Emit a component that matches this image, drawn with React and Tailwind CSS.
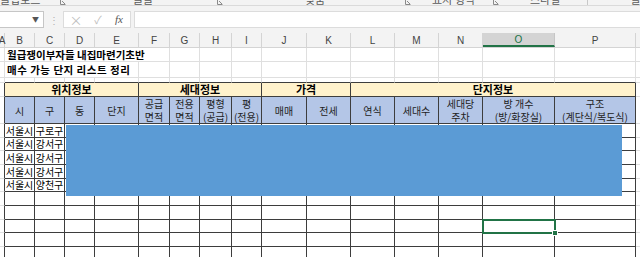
import React from 'react';

const FONT = { fontFamily: '"Noto Sans CJK KR", "Liberation Sans", sans-serif' };

// column widths A..Q
const W = [5, 30, 30, 30, 44, 31, 30, 32, 30, 45, 44, 44, 44, 44, 72, 81, 30];
const LETTERS = ['A', 'B', 'C', 'D', 'E', 'F', 'G', 'H', 'I', 'J', 'K', 'L', 'M', 'N', 'O', 'P', 'Q'];

const LIGHT = 'shrink-0 border-r border-b border-[#dfdfdf]';
const DARK = 'shrink-0 border-r border-b border-[#3d3d3d]';
const EDGE = 'shrink-0 border-r border-b border-r-[#3d3d3d] border-b-[#dfdfdf]';
const TOPDARK = 'shrink-0 border-r border-b border-r-[#dfdfdf] border-b-[#3d3d3d]';

const SUB = ['시', '구', '동', '단지', '공급\n면적', '전용\n면적', '평형\n(공급)', '평\n(전용)', '매매', '전세', '연식', '세대수', '세대당\n주차', '방 개수\n(방/화장실)', '구조\n(계단식/복도식)'];
const DATA = ['구로구', '강서구', '강서구', '강서구', '양천구'];
const ROW_H = [14, 13, 14, 14, 13, 14, 14, 13, 14, 14];

function Launcher() {
  return (
    <svg width="6" height="6" viewBox="0 0 6 6" className="mt-[-1px]">
      <path d="M0.5 0.5 V5.5 H5.5" fill="none" stroke="#8a8a8a" strokeWidth="1" />
      <path d="M2 2 L5 5" stroke="#8a8a8a" strokeWidth="1" />
    </svg>
  );
}

function Ribbon() {
  const seg = 'shrink-0 overflow-hidden whitespace-nowrap';
  const txt = 'block -mt-[7px] text-[11px] leading-[12px] text-[#5a5a5a]';
  return (
    <div className="flex h-[5px] overflow-hidden bg-[#f3f3f3]" style={FONT}>
      <div className={`${seg} w-[60px]`}><span className={txt}>클립보드</span></div>
      <div className={`${seg} w-[73px]`}><Launcher /></div>
      <div className={`${seg} w-[84px]`}><span className={txt}>글꼴</span></div>
      <div className={`${seg} w-[88px]`}><Launcher /></div>
      <div className={`${seg} w-[100px]`}><span className={txt}>맞춤</span></div>
      <div className={`${seg} w-[27px]`}><Launcher /></div>
      <div className={`${seg} w-[61px]`}><span className={txt}>표시 형식</span></div>
      <div className={`${seg} w-[37px]`}><Launcher /></div>
      <div className={`${seg} w-[57px]`}><span className={txt}>스타일</span></div>
      <div className={`${seg} w-[43px]`}><div className="w-px h-[5px] bg-[#c8c8c8]" /></div>
      <div className={`${seg} w-[10px]`}><span className={txt}>셀</span></div>
    </div>
  );
}

function FormulaBar() {
  return (
    <div className="flex items-center h-[28px] bg-[#f3f3f3] border-t border-[#dadada]">
      <div className="flex items-center justify-end w-[44px] h-[17px] bg-white border border-l-0 border-[#c6c6c6] pr-[4px]">
        <span className="text-[7px] text-[#555]">▼</span>
      </div>
      <div className="w-[19px] flex justify-center text-[#b0b0b0] text-[10px] leading-none">⋮</div>
      <div className="flex items-center w-[68px] h-[17px] bg-white border border-[#dcdcdc]">
        <span className="w-[24px] text-center text-[13px] leading-none text-[#c0c0c0]">×</span>
        <span className="w-[20px] text-center text-[11px] leading-none text-[#c0c0c0]">✓</span>
        <span className="w-[22px] text-center text-[11px] leading-none italic text-[#555]" style={{ fontFamily: '"Liberation Serif", serif' }}>fx</span>
      </div>
      <div className="ml-[3px] flex-1 h-[17px] bg-white border border-r-0 border-[#dcdcdc]" />
    </div>
  );
}

function ColHeaders() {
  return (
    <div className="flex h-[15px] bg-[#f3f3f3] border-b border-[#d4d4d4]" style={{ fontFamily: '"Liberation Sans", sans-serif' }}>
      {LETTERS.map((l, i) => (
        <div
          key={l}
          className={
            l === 'O'
              ? 'shrink-0 flex items-center justify-center bg-[#d4d4d4] border-r border-[#c6c6c6] border-b-2 border-b-[#217346] text-[#217346] text-[10px]'
              : 'shrink-0 flex items-center justify-center border-r border-[#d4d4d4] text-[#444] text-[10px]'
          }
          style={{ width: W[i] }}
        >
          {l}
        </div>
      ))}
    </div>
  );
}

export default function App() {
  return (
    <div className="relative w-[640px] h-[257px] overflow-hidden bg-white" style={FONT}>
      <Ribbon />
      <FormulaBar />
      <ColHeaders />

      {/* row 1 */}
      <div className="flex h-[14px]">
        <div className={LIGHT} style={{ width: 5 }} />
        <div className={`${LIGHT} flex items-center pl-[2px] whitespace-nowrap text-[10.5px] font-bold text-black`} style={{ width: 165 }}>
          월급쟁이부자들 내집마련기초반
        </div>
        {W.slice(6).map((w, i) => <div key={i} className={LIGHT} style={{ width: w }} />)}
      </div>

      {/* row 2 */}
      <div className="flex h-[16px]">
        <div className={LIGHT} style={{ width: 5 }} />
        <div className={`${LIGHT} flex items-center pl-[2px] whitespace-nowrap text-[10.5px] font-bold text-black tracking-[0.5px]`} style={{ width: 134 }}>
          매수 가능 단지 리스트 정리
        </div>
        {W.slice(5).map((w, i) => <div key={i} className={LIGHT} style={{ width: w }} />)}
      </div>

      {/* row 3 */}
      <div className="flex h-[5px]">
        {W.map((w, i) => (
          <div key={i} className={i >= 1 && i <= 15 ? TOPDARK : LIGHT} style={{ width: w }} />
        ))}
      </div>

      {/* group header row */}
      <div className="flex h-[14px] text-[11px] font-bold text-black leading-none">
        <div className={EDGE} style={{ width: 5 }} />
        <div className={`${DARK} flex items-center justify-center bg-[#fff2cc]`} style={{ width: 134 }}>위치정보</div>
        <div className={`${DARK} flex items-center justify-center bg-[#fff2cc]`} style={{ width: 123 }}>세대정보</div>
        <div className={`${DARK} flex items-center justify-center bg-[#fff2cc]`} style={{ width: 89 }}>가격</div>
        <div className={`${DARK} flex items-center justify-center bg-[#fff2cc]`} style={{ width: 285 }}>단지정보</div>
        <div className={LIGHT} style={{ width: 30 }} />
      </div>

      {/* sub header row */}
      <div className="flex h-[27px] text-[10px] leading-[13px] text-[#222]">
        <div className={EDGE} style={{ width: 5 }} />
        {SUB.map((s, i) => (
          <div key={i} className={`${DARK} flex items-center justify-center text-center whitespace-pre bg-[#b4c6e7] overflow-hidden`} style={{ width: W[i + 1] }}>
            {s}
          </div>
        ))}
        <div className={LIGHT} style={{ width: 30 }} />
      </div>

      {/* body rows */}
      {ROW_H.map((h, r) => (
        <div key={r} className="flex text-[10px] leading-none text-black" style={{ height: h }}>
          <div className={EDGE} style={{ width: 5 }} />
          {W.slice(1, 16).map((w, c) => (
            <div key={c} className={`${DARK} flex items-center justify-center whitespace-nowrap overflow-hidden`} style={{ width: w }}>
              {r < 5 && c === 0 ? '서울시' : r < 5 && c === 1 ? DATA[r] : ''}
            </div>
          ))}
          <div className={LIGHT} style={{ width: 30 }} />
        </div>
      ))}

      {/* shape lying over the sheet */}
      <div className="absolute left-[66px] top-[125px] w-[556px] h-[71px] bg-[#5b9bd5]" />

      {/* active cell */}
      <div className="absolute left-[482px] top-[219px] w-[74px] h-[15px] border-2 border-[#217346]" />
      <div className="absolute left-[552px] top-[230px] w-[6px] h-[6px] bg-[#217346] border border-white" />
    </div>
  );
}
